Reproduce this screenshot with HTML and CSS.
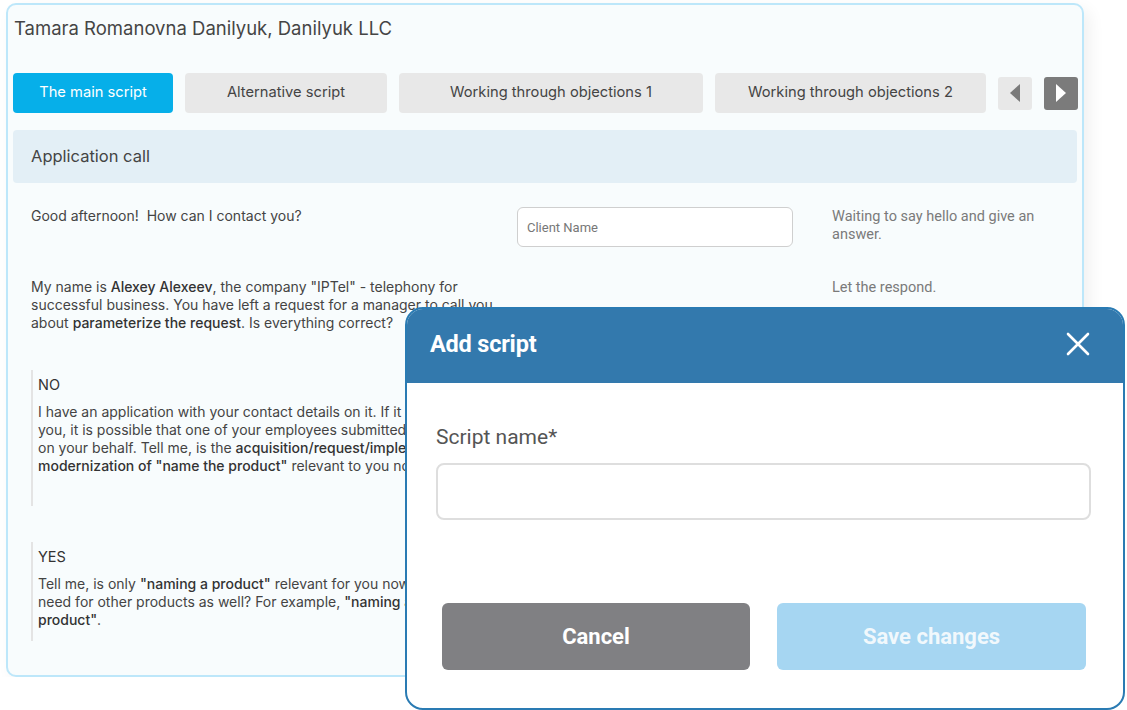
FILE: index.html
```html
<!DOCTYPE html>
<html lang="en">
<head>
    <meta charset="UTF-8">
    <meta name="viewport" content="width=device-width, initial-scale=1.0">
    <title>Scripts</title>
    <link rel="stylesheet" href="styles.css">
</head>
<body>
    <div class="card">
        <h1 class="client">Tamara Romanovna Danilyuk, Danilyuk LLC</h1>

        <div class="tabs">
            <button class="tab active" style="width:160px">The main script</button>
            <button class="tab" style="width:202px">Alternative script</button>
            <button class="tab" style="width:304px">Working through objections 1</button>
            <button class="tab" style="width:271px">Working through objections 2</button>
            <button class="arrow">
                <svg width="12" height="18" viewBox="0 0 12 18"><path d="M11 0 L11 18 L1 9 Z" fill="#7a7a7a"/></svg>
            </button>
            <button class="arrow dark">
                <svg width="12" height="18" viewBox="0 0 12 18"><path d="M1 0 L1 18 L11 9 Z" fill="#fff"/></svg>
            </button>
        </div>

        <div class="section-bar">Application call</div>

        <div class="steps">
            <div class="step">
                <p class="say">Good afternoon!&nbsp; How can I contact you?</p>
                <input class="field" type="text" placeholder="Client Name">
                <p class="note">Waiting to say hello and give an answer.</p>
            </div>
            <div class="step second">
                <p class="say">My name is <b>Alexey Alexeev</b>, the company "IPTel" - telephony for successful business. You have left a request for a manager to call you about <b>parameterize the request</b>. Is everything correct?</p>
                <div></div>
                <p class="note">Let the respond.</p>
            </div>

            <div class="answer no">
                <div class="answer-label">NO</div>
                <p>I have an application with your contact details on it. If it wasn't<br>
                you, it is possible that one of your employees submitted the application<br>
                on your behalf. Tell me, is the <b>acquisition/request/implementation/</b><br>
                <b>modernization of "name the product"</b> relevant to you now?</p>
            </div>
            <div class="answer">
                <div class="answer-label">YES</div>
                <p>Tell me, is only <b>"naming a product"</b> relevant for you now, or is there a<br>
                need for other products as well? For example, <b>"naming another</b><br>
                <b>product"</b>.</p>
            </div>
        </div>
    </div>

    <div class="modal">
        <div class="modal-header">
            <span class="modal-title">Add script</span>
            <svg class="modal-close" width="24" height="24" viewBox="0 0 24 24">
                <path d="M2 2 L22 22 M22 2 L2 22" stroke="#fff" stroke-width="2.6" stroke-linecap="round"/>
            </svg>
        </div>
        <div class="modal-body">
            <label class="modal-label">Script name*</label>
            <input class="modal-input" type="text">
            <div class="modal-buttons">
                <button class="btn cancel">Cancel</button>
                <button class="btn save">Save changes</button>
            </div>
        </div>
    </div>
</body>
</html>
```
FILE: styles.css
```css
body {
    font-family: Inter, "Open Sans", sans-serif;
    margin: 0;
    padding: 0;
    background: #fff;
    color: #444;
    overflow: hidden;
}

.card {
    box-sizing: border-box;
    width: 1078px;
    height: 674px;
    margin: 3px 0 0 6px;
    padding: 10px 5px 0 5px;
    border: 2px solid #bde7fa;
    border-radius: 10px;
    background: #f8fcfd;
    box-shadow: 6px 6px 16px rgba(0, 0, 0, 0.06);
}

.client {
    margin: 0 0 0 1px;
    font-size: 18.5px;
    font-weight: 400;
    line-height: 26px;
    color: #454545;
}

.tabs {
    display: flex;
    align-items: center;
    gap: 12px;
    margin-top: 32px;
    height: 40px;
}

.tab {
    height: 40px;
    border: none;
    border-radius: 4px;
    background: #e8e8e8;
    color: #444;
    font-family: Inter, sans-serif;
    font-size: 14.7px;
    padding: 0 0 2px 0;
    flex-shrink: 0;
}

.tab.active {
    background: #06afe9;
    color: #fff;
}

.arrow {
    width: 34px;
    height: 33px;
    border: none;
    border-radius: 3px;
    background: #e8e8e8;
    display: flex;
    align-items: center;
    justify-content: center;
    padding: 0;
    flex-shrink: 0;
}

.arrow.dark {
    background: #7b7b7b;
}

.section-bar {
    margin-top: 17px;
    height: 53px;
    line-height: 53px;
    padding-left: 18px;
    border-radius: 4px;
    background: #e3eff6;
    font-size: 16.5px;
    color: #444;
}

.steps {
    padding: 24px 0 0 18px;
}

.step {
    display: grid;
    grid-template-columns: 486px 276px 1fr;
    align-items: start;
}

.step.second {
    margin-top: 31px;
}

.say {
    margin: 0;
    width: 478px;
    font-size: 14px;
    line-height: 18px;
    color: #444;
}

.say b,
.answer b {
    font-weight: 500;
    color: #333;
}

.field {
    box-sizing: border-box;
    height: 40px;
    width: 276px;
    border: 1px solid #cfcfcf;
    border-radius: 6px;
    background: #fff;
    padding: 0 9px;
    font-family: Roboto, sans-serif;
    font-size: 13px;
}

.field::placeholder {
    color: #777;
}

.note {
    margin: 1px 0 0 39px;
    width: 232px;
    font-family: Roboto, sans-serif;
    font-size: 14.5px;
    line-height: 18px;
    color: #7a7a7a;
}

.answer {
    margin-top: 36px;
    padding: 6px 0 12px 5px;
    border-left: 2px solid #e4e4e4;
}

.answer.no {
    margin-top: 38px;
    min-height: 118px;
}

.answer-label {
    font-size: 14.5px;
    line-height: 18px;
    color: #333;
}

.answer p {
    margin: 9px 0 0 0;
    white-space: nowrap;
    font-size: 14px;
    line-height: 18px;
    color: #444;
}

/* modal over the card */
.modal {
    position: absolute;
    left: 405px;
    top: 307px;
    box-sizing: border-box;
    width: 720px;
    height: 403px;
    border: 2px solid #2a7bb3;
    border-radius: 18px;
    background: #fff;
    overflow: hidden;
    font-family: Roboto, sans-serif;
}

.modal-header {
    box-sizing: border-box;
    height: 74px;
    background: #3379ad;
    display: flex;
    align-items: center;
    justify-content: space-between;
    padding: 0 33px 4px 23px;
}

.modal-title {
    color: #fff;
    font-size: 23.5px;
    font-weight: 700;
    letter-spacing: -0.2px;
}

.modal-body {
    padding: 42px 32px 0 29px;
}

.modal-label {
    display: block;
    font-size: 21px;
    line-height: 24px;
    color: #555;
}

.modal-input {
    display: block;
    box-sizing: border-box;
    width: 655px;
    height: 57px;
    margin-top: 14px;
    border: 2px solid #dedede;
    border-radius: 8px;
    background: #fff;
}

.modal-buttons {
    display: flex;
    gap: 27px;
    margin: 83px 0 0 6px;
}

.btn {
    width: 308px;
    height: 67px;
    border: none;
    border-radius: 6px;
    color: #fff;
    font-family: Roboto, sans-serif;
    font-size: 22px;
    font-weight: 700;
}

.btn.cancel {
    background: #808083;
}

.btn.save {
    width: 309px;
    background: #a6d6f2;
    color: rgba(255, 255, 255, 0.85);
}
```
